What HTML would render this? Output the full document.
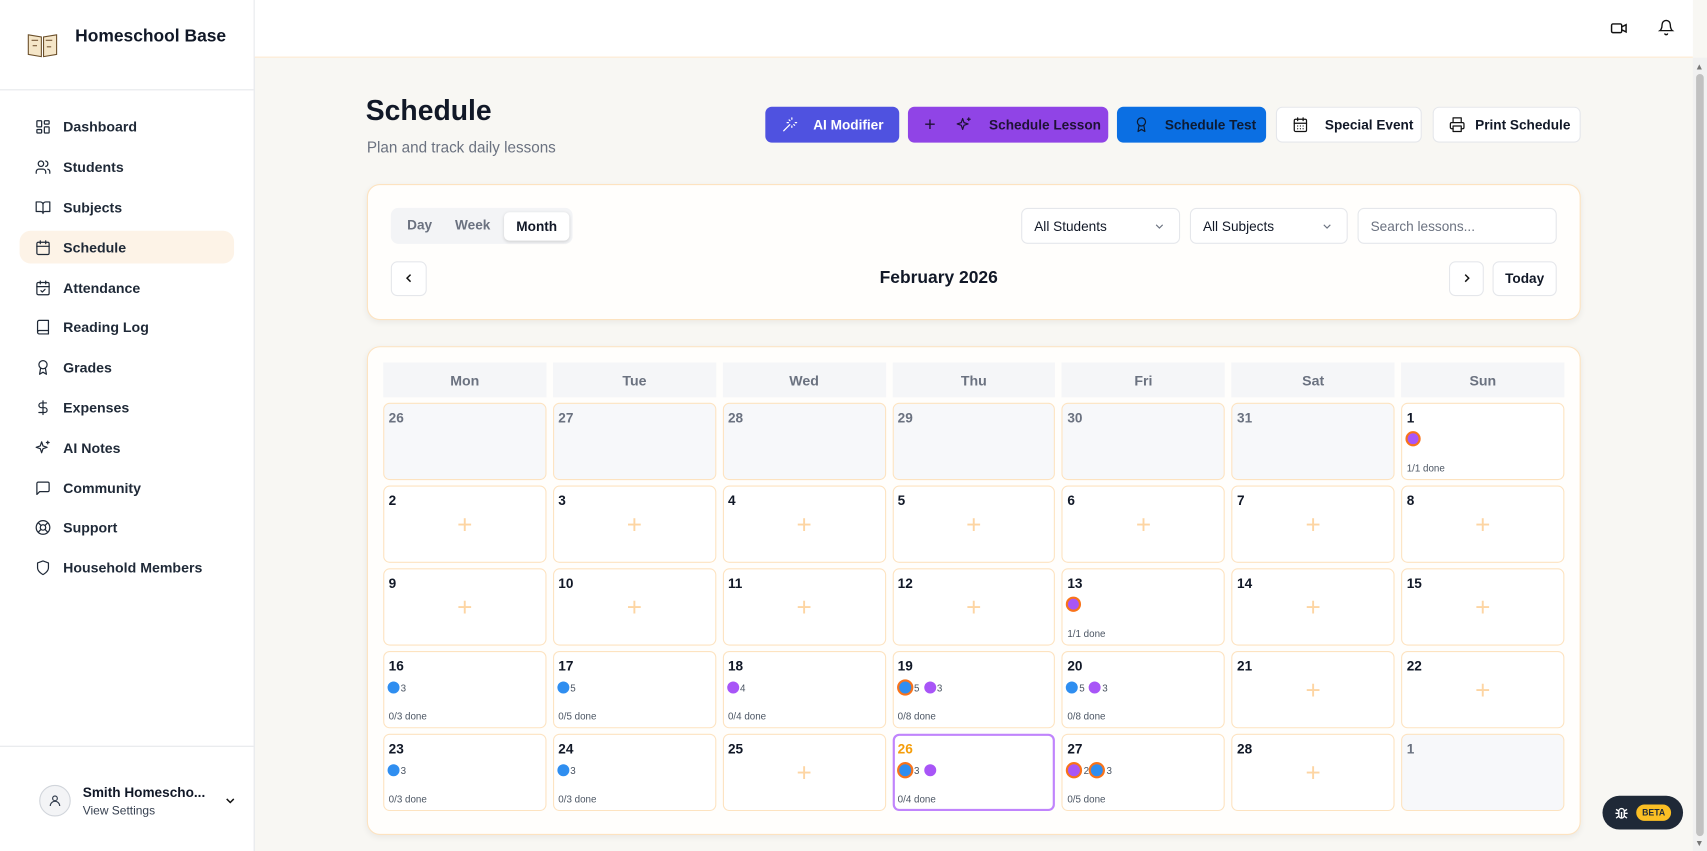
<!DOCTYPE html>
<html><head><meta charset="utf-8"><style>
*{box-sizing:border-box;margin:0;padding:0}
html,body{width:1707px;height:851px;overflow:hidden;background:#f8f7f3}
#root{position:absolute;left:0;top:0;width:1568px;height:782px;transform:scale(1.08865);transform-origin:0 0;font-family:"Liberation Sans",sans-serif;background:#f8f7f3;color:#111827;overflow:hidden}
.abs{position:absolute}
.side{left:0;top:0;width:234px;height:782px;background:#fff;border-right:1px solid #e5e7eb}
.nav{position:absolute;left:18px;width:197px;height:30px;display:flex;align-items:center;font-size:13px;font-weight:600;color:#1f2937;border-radius:10px}
.nav svg{position:absolute;left:14px;width:15px;height:15px;fill:none;stroke:#1f2937;stroke-width:1.8;stroke-linecap:round;stroke-linejoin:round}
.nav span{position:absolute;left:40px}
.btn{position:absolute;top:98px;height:33px;border-radius:6px;display:flex;align-items:center;font-size:12.5px;font-weight:600;white-space:nowrap}
.btn svg{width:15px;height:15px;fill:none;stroke-width:1.8;stroke-linecap:round;stroke-linejoin:round;flex:none}
.card{position:absolute;background:#fffefc;border:1px solid #fde3c0;border-radius:12px;box-shadow:0 2px 6px rgba(0,0,0,.06)}
.sel{position:absolute;top:191px;height:33px;background:#fff;border:1px solid #e5e7eb;border-radius:6px;font-size:12.5px;display:flex;align-items:center;padding-left:11px}
.grid{position:absolute;left:352px;top:333px;width:1085px;display:grid;grid-template-columns:repeat(7,1fr);column-gap:6px}
.hd{height:32px;background:#f5f6f8;display:flex;align-items:center;justify-content:center;font-size:13px;font-weight:600;color:#6b7280}
.cell{height:71px;border:1px solid #fde3c0;border-radius:6px;background:#fff;position:relative;font-size:12.5px;font-weight:600;margin-top:5px}
.cell.o{background:#f7f8fa;color:#6b7280}
.cell .n{position:absolute;left:4px;top:6px}
.plus{position:absolute;left:50%;top:36px;transform:translate(-50%,-50%);color:#fdd5a3;font-size:24px;font-weight:300}
.dots{position:absolute;left:3px;top:27px;display:flex;align-items:center;font-size:9px;color:#4b5563;font-weight:400}
.d{width:11px;height:11px;border-radius:50%;display:inline-block;margin-right:1px}
.b{background:#2f8ef0}.p{background:#a855f7}.r{border:2px solid #f9731a}
.dn{position:absolute;left:4px;top:54px;font-size:9px;color:#4b5563;font-weight:400}
.dots .d+span{margin-right:4px}
</style></head><body><div id="root">
<div class="abs side">
 <svg class="abs" style="left:24px;top:28px" width="30" height="26" viewBox="0 0 30 26"><path d="M2 4 L14 6 L14 24 L2 22Z" fill="#f5e6c8" stroke="#6b4f2a"/><path d="M28 4 L16 6 L16 24 L28 22Z" fill="#f5e6c8" stroke="#6b4f2a"/><path d="M5 9h6M18 9h6M6 14h4M19 15h4" stroke="#7a5b3a"/></svg>
 <div class="abs" style="left:69px;top:25px;font-size:16px;font-weight:700">Homeschool Base</div>
 <div class="abs" style="left:0;top:82px;width:233px;border-top:1px solid #e5e7eb"></div>
 <div class="nav" style="top:101px"><svg viewBox="0 0 24 24"><rect x="3" y="3" width="7" height="9" rx="1"/><rect x="14" y="3" width="7" height="5" rx="1"/><rect x="14" y="12" width="7" height="9" rx="1"/><rect x="3" y="16" width="7" height="5" rx="1"/></svg><span>Dashboard</span></div>
 <div class="nav" style="top:138px"><svg viewBox="0 0 24 24"><circle cx="9" cy="7" r="4"/><path d="M2 21v-2a4 4 0 0 1 4-4h6a4 4 0 0 1 4 4v2M16 3.1a4 4 0 0 1 0 7.8M22 21v-2a4 4 0 0 0-3-3.9"/></svg><span>Students</span></div>
 <div class="nav" style="top:175px"><svg viewBox="0 0 24 24"><path d="M2 4h6a4 4 0 0 1 4 4v13a3 3 0 0 0-3-3H2zM22 4h-6a4 4 0 0 0-4 4v13a3 3 0 0 1 3-3h7z"/></svg><span>Subjects</span></div>
 <div class="nav" style="top:212px;background:#fdf3e7"><svg viewBox="0 0 24 24"><rect x="3" y="4" width="18" height="18" rx="2"/><path d="M16 2v4M8 2v4M3 10h18"/></svg><span>Schedule</span></div>
 <div class="nav" style="top:249px"><svg viewBox="0 0 24 24"><rect x="3" y="4" width="18" height="18" rx="2"/><path d="M16 2v4M8 2v4M3 10h18M9 16l2 2 4-4"/></svg><span>Attendance</span></div>
 <div class="nav" style="top:285px"><svg viewBox="0 0 24 24"><path d="M4 19.5A2.5 2.5 0 0 1 6.5 17H20V2H6.5A2.5 2.5 0 0 0 4 4.5v15A2.5 2.5 0 0 0 6.5 22H20v-5"/></svg><span>Reading Log</span></div>
 <div class="nav" style="top:322px"><svg viewBox="0 0 24 24"><circle cx="12" cy="8" r="6"/><path d="M15.5 13L17 22l-5-3-5 3 1.5-9"/></svg><span>Grades</span></div>
 <div class="nav" style="top:359px"><svg viewBox="0 0 24 24"><path d="M12 2v20M17 5H9.5a3.5 3.5 0 0 0 0 7h5a3.5 3.5 0 0 1 0 7H6"/></svg><span>Expenses</span></div>
 <div class="nav" style="top:396px"><svg viewBox="0 0 24 24"><path d="M10 3l2 6 6 2-6 2-2 6-2-6-6-2 6-2zM19 2v4M17 4h4"/></svg><span>AI Notes</span></div>
 <div class="nav" style="top:433px"><svg viewBox="0 0 24 24"><path d="M21 15a2 2 0 0 1-2 2H7l-4 4V5a2 2 0 0 1 2-2h14a2 2 0 0 1 2 2z"/></svg><span>Community</span></div>
 <div class="nav" style="top:469px"><svg viewBox="0 0 24 24"><circle cx="12" cy="12" r="10"/><circle cx="12" cy="12" r="4"/><path d="M5 5l4 4M15 15l4 4M15 9l4-4M5 19l4-4"/></svg><span>Support</span></div>
 <div class="nav" style="top:506px"><svg viewBox="0 0 24 24"><path d="M12 22s8-4 8-10V5l-8-3-8 3v7c0 6 8 10 8 10z"/></svg><span>Household Members</span></div>
 <div class="abs" style="left:0;top:685px;width:233px;border-top:1px solid #e5e7eb"></div>
 <div class="abs" style="left:36px;top:721px;width:29px;height:29px;border-radius:50%;background:#f3f4f6;border:1px solid #d1d5db"></div>
 <svg class="abs" style="left:44px;top:729px" width="13" height="13" viewBox="0 0 24 24" fill="none" stroke="#374151" stroke-width="2"><circle cx="12" cy="8" r="4"/><path d="M4 21a8 8 0 0 1 16 0"/></svg>
 <div class="abs" style="left:76px;top:721px;font-size:12.5px;font-weight:700">Smith Homescho...</div>
 <div class="abs" style="left:76px;top:739px;font-size:11px;color:#374151">View Settings</div>
 <svg class="abs" style="left:205px;top:729px" width="13" height="13" viewBox="0 0 24 24" fill="none" stroke="#111" stroke-width="2.5"><path d="M6 9l6 6 6-6"/></svg>
</div>
<div class="abs" style="left:234px;top:0;width:1321px;height:53px;background:#fff;border-bottom:1px solid #fde9d0"></div>
<svg class="abs" style="left:1479px;top:18px" width="16" height="16" viewBox="0 0 24 24" fill="none" stroke="#111" stroke-width="2"><rect x="2" y="6" width="14" height="12" rx="2"/><path d="M16 10l6-3v10l-6-3"/></svg>
<svg class="abs" style="left:1523px;top:17px" width="15" height="16" viewBox="0 0 24 24" fill="none" stroke="#111" stroke-width="2"><path d="M6 8a6 6 0 0 1 12 0c0 7 3 9 3 9H3s3-2 3-9M10 21a2 2 0 0 0 4 0"/></svg>
<div class="abs" style="left:1555px;top:53px;width:13px;height:729px;background:#f1f1f1"></div>
<div class="abs" style="left:1558px;top:68px;width:7px;height:700px;background:#c1c1c1;border-radius:4px"></div>
<div class="abs" style="left:1557px;top:57px;font-size:8px;color:#777">▲</div>
<div class="abs" style="left:1557px;top:770px;font-size:8px;color:#777">▼</div>

<div class="abs" style="left:336px;top:86px;font-size:26px;font-weight:700">Schedule</div>
<div class="abs" style="left:337px;top:127px;font-size:14px;color:#6b7280">Plan and track daily lessons</div>

<div class="btn" style="left:703px;width:123px;background:#4f52e0;color:#fff"><svg style="margin-left:15px" viewBox="0 0 24 24" stroke="#fff"><path d="M15 4V2M15 16v-2M8 9h2M20 9h2M17.8 11.8L19 13M3 21l9-9M12.2 6.2L11 5"/></svg><span style="margin-left:14px">AI Modifier</span></div>
<div class="btn" style="left:834px;width:184px;background:#9044e6;color:#1f1235"><span style="margin-left:15px;font-size:18px;font-weight:400">+</span><svg style="margin-left:18px" viewBox="0 0 24 24" stroke="#1f1235"><path d="M10 3l2 6 6 2-6 2-2 6-2-6-6-2 6-2zM19 2v4M17 4h4"/></svg><span style="margin-left:16px">Schedule Lesson</span></div>
<div class="btn" style="left:1026px;width:137px;background:#0b6fe3;color:#0d1b33"><svg style="margin-left:15px" viewBox="0 0 24 24" stroke="#0d1b33"><circle cx="12" cy="8" r="6"/><path d="M15.5 13L17 22l-5-3-5 3 1.5-9"/></svg><span style="margin-left:14px">Schedule Test</span></div>
<div class="btn" style="left:1172px;width:134px;background:#fff;border:1px solid #e5e7eb"><svg style="margin-left:14px" viewBox="0 0 24 24" stroke="#111"><rect x="3" y="4" width="18" height="18" rx="2"/><path d="M16 2v4M8 2v4M3 10h18M8 14h.01M12 14h.01M16 14h.01M8 18h.01M12 18h.01M16 18h.01"/></svg><span style="margin-left:15px">Special Event</span></div>
<div class="btn" style="left:1316px;width:136px;background:#fff;border:1px solid #e5e7eb"><svg style="margin-left:14px" viewBox="0 0 24 24" stroke="#111"><path d="M6 9V2h12v7M6 18H4a2 2 0 0 1-2-2v-5a2 2 0 0 1 2-2h16a2 2 0 0 1 2 2v5a2 2 0 0 1-2 2h-2"/><rect x="6" y="14" width="12" height="8"/></svg><span style="margin-left:9px">Print Schedule</span></div>

<div class="card" style="left:337px;top:169px;width:1115px;height:125px"></div>
<div class="abs" style="left:359px;top:191px;width:167px;height:33px;background:#f3f4f6;border-radius:7px"></div>
<div class="abs" style="left:374px;top:200px;font-size:12.5px;font-weight:600;color:#6b7280">Day</div>
<div class="abs" style="left:418px;top:200px;font-size:12.5px;font-weight:600;color:#6b7280">Week</div>
<div class="abs" style="left:463px;top:195px;width:60px;height:26px;background:#fff;border-radius:5px;box-shadow:0 1px 3px rgba(0,0,0,.15);font-size:12.5px;font-weight:600;display:flex;align-items:center;justify-content:center">Month</div>
<div class="sel" style="left:938px;width:146px">All Students<svg style="position:absolute;right:12px" width="12" height="12" viewBox="0 0 24 24" fill="none" stroke="#6b7280" stroke-width="2"><path d="M6 9l6 6 6-6"/></svg></div>
<div class="sel" style="left:1093px;width:145px">All Subjects<svg style="position:absolute;right:12px" width="12" height="12" viewBox="0 0 24 24" fill="none" stroke="#6b7280" stroke-width="2"><path d="M6 9l6 6 6-6"/></svg></div>
<div class="sel" style="left:1247px;width:183px;color:#6b7280">Search lessons...</div>
<div class="abs" style="left:359px;top:240px;width:33px;height:32px;background:#fff;border:1px solid #e5e7eb;border-radius:6px"></div>
<svg class="abs" style="left:369px;top:249px" width="13" height="13" viewBox="0 0 24 24" fill="none" stroke="#111" stroke-width="2.5"><path d="M15 18l-6-6 6-6"/></svg>
<div class="abs" style="left:808px;top:247px;font-size:16px;font-weight:600">February 2026</div>
<div class="abs" style="left:1331px;top:240px;width:32px;height:32px;background:#fff;border:1px solid #e5e7eb;border-radius:6px"></div>
<svg class="abs" style="left:1341px;top:249px" width="13" height="13" viewBox="0 0 24 24" fill="none" stroke="#111" stroke-width="2.5"><path d="M9 18l6-6-6-6"/></svg>
<div class="abs" style="left:1371px;top:240px;width:59px;height:32px;background:#fff;border:1px solid #e5e7eb;border-radius:6px;font-size:12.5px;font-weight:600;display:flex;align-items:center;justify-content:center">Today</div>

<div class="card" style="left:337px;top:318px;width:1115px;height:449px"></div>
<div class="grid">
<div class="hd">Mon</div><div class="hd">Tue</div><div class="hd">Wed</div><div class="hd">Thu</div><div class="hd">Fri</div><div class="hd">Sat</div><div class="hd">Sun</div>
<div class="cell o"><span class="n">26</span></div><div class="cell o"><span class="n">27</span></div><div class="cell o"><span class="n">28</span></div><div class="cell o"><span class="n">29</span></div><div class="cell o"><span class="n">30</span></div><div class="cell o"><span class="n">31</span></div>
<div class="cell"><span class="n">1</span><div class="dots" style="top:25px"><i class="d p" style="width:14px;height:14px;border:2px solid #f9731a"></i></div><div class="dn">1/1 done</div></div>
<div class="cell"><span class="n">2</span><span class="plus">+</span></div><div class="cell"><span class="n">3</span><span class="plus">+</span></div><div class="cell"><span class="n">4</span><span class="plus">+</span></div><div class="cell"><span class="n">5</span><span class="plus">+</span></div><div class="cell"><span class="n">6</span><span class="plus">+</span></div><div class="cell"><span class="n">7</span><span class="plus">+</span></div><div class="cell"><span class="n">8</span><span class="plus">+</span></div>
<div class="cell"><span class="n">9</span><span class="plus">+</span></div><div class="cell"><span class="n">10</span><span class="plus">+</span></div><div class="cell"><span class="n">11</span><span class="plus">+</span></div><div class="cell"><span class="n">12</span><span class="plus">+</span></div>
<div class="cell"><span class="n">13</span><div class="dots" style="top:25px"><i class="d p" style="width:14px;height:14px;border:2px solid #f9731a"></i></div><div class="dn">1/1 done</div></div>
<div class="cell"><span class="n">14</span><span class="plus">+</span></div><div class="cell"><span class="n">15</span><span class="plus">+</span></div>
<div class="cell"><span class="n">16</span><div class="dots"><i class="d b"></i><span>3</span></div><div class="dn">0/3 done</div></div>
<div class="cell"><span class="n">17</span><div class="dots"><i class="d b"></i><span>5</span></div><div class="dn">0/5 done</div></div>
<div class="cell"><span class="n">18</span><div class="dots"><i class="d p"></i><span>4</span></div><div class="dn">0/4 done</div></div>
<div class="cell"><span class="n">19</span><div class="dots" style="top:25px"><i class="d b r" style="width:15px;height:15px"></i><span>5</span><i class="d p"></i><span>3</span></div><div class="dn">0/8 done</div></div>
<div class="cell"><span class="n">20</span><div class="dots"><i class="d b"></i><span>5</span><i class="d p"></i><span>3</span></div><div class="dn">0/8 done</div></div>
<div class="cell"><span class="n">21</span><span class="plus">+</span></div><div class="cell"><span class="n">22</span><span class="plus">+</span></div>
<div class="cell"><span class="n">23</span><div class="dots"><i class="d b"></i><span>3</span></div><div class="dn">0/3 done</div></div>
<div class="cell"><span class="n">24</span><div class="dots"><i class="d b"></i><span>3</span></div><div class="dn">0/3 done</div></div>
<div class="cell"><span class="n">25</span><span class="plus">+</span></div>
<div class="cell" style="border:2px solid #c084fc"><span class="n" style="color:#f59e0b;left:3px;top:5px">26</span><div class="dots" style="top:24px;left:2px"><i class="d b r" style="width:15px;height:15px"></i><span>3</span><i class="d p"></i></div><div class="dn" style="left:3px;top:53px">0/4 done</div></div>
<div class="cell"><span class="n">27</span><div class="dots" style="top:25px"><i class="d p r" style="width:15px;height:15px"></i><span style="margin-right:0">2</span><i class="d b r" style="width:15px;height:15px"></i><span>3</span></div><div class="dn">0/5 done</div></div>
<div class="cell"><span class="n">28</span><span class="plus">+</span></div>
<div class="cell o"><span class="n">1</span></div>
</div>

<div class="abs" style="left:1472px;top:731px;width:74px;height:31px;background:#1f2937;border-radius:16px"></div>
<svg class="abs" style="left:1482px;top:739px" width="15" height="15" viewBox="0 0 24 24" fill="none" stroke="#fff" stroke-width="2"><rect x="8" y="6" width="8" height="14" rx="4"/><path d="M12 20v-9M3 13h5M16 13h5M4 7l4 3M20 7l-4 3M4 20l4-3M20 20l-4-3"/></svg>
<div class="abs" style="left:1503px;top:739px;width:32px;height:15px;background:#fbbf24;border-radius:8px;font-size:8px;font-weight:700;display:flex;align-items:center;justify-content:center;color:#1f2937">BETA</div>
</div></body></html>
